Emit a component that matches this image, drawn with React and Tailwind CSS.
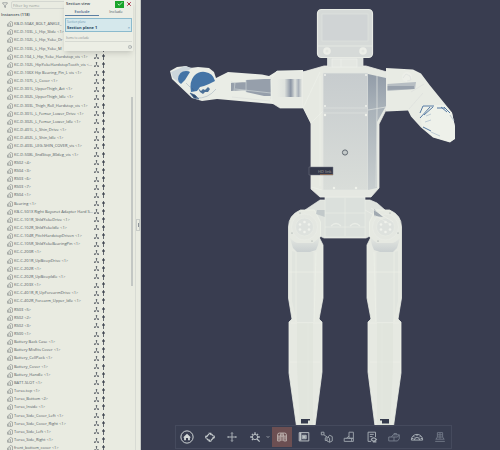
import React from 'react';
import { Filter, Check, X, Info, ChevronDown } from 'lucide-react';

const PARTS = [
  'KB-D-50AX_BOLT_ANKLE_',
  'KC-D-103L_L_Hip_Slide <1>',
  'KC-D-102L_L_Hip_Yoke_Dr',
  'KC-D-103L_L_Hip_Yoke_M',
  'KC-D-104_L_Hip_Yoke_Hardstop_vis <1>',
  'KC-D-102L_HipYokeHardstopTooth_vis <...',
  'KC-D-106X Hip Bearing_Pin_L vis <1>',
  'KC-D-107L_L_Cover <1>',
  'KC-D-301L_UpperThigh_Act <1>',
  'KC-D-302L_UpperThigh_Idle <1>',
  'KC-D-303L_Thigh_Roll_Hardstop_vis <1>',
  'KC-D-301L_L_Femur_Lower_Drive <1>',
  'KC-D-302L_L_Femur_Lower_Idle <1>',
  'KC-D-401L_L_Shin_Drive <1>',
  'KC-D-402L_L_Shin_Idle <1>',
  'KC-D-403L_LEG-SHIN_COVER_vis <1>',
  'KC-D-508L_EndStop_80deg_vis <1>',
  'RS02 <4>',
  'RS04 <3>',
  'RS03 <6>',
  'RS03 <7>',
  'RS04 <1>',
  'Bearing <1>',
  'KB-C-501X Right Bayonet Adapter Hard S...',
  'KC-C-101R_ShldYokeDrive <1>',
  'KC-C-102R_ShldYokeIdle <1>',
  'KC-C-104R_PitchHardstopDriven <1>',
  'KC-C-105R_ShldYokeBearingPin <1>',
  'KC-C-200R <1>',
  'KC-C-201R_UpBicepDrive <1>',
  'KC-C-202R <1>',
  'KC-C-202R_UpBicepIdle <1>',
  'KC-C-203X <1>',
  'KC-C-401R_R_UpForearmDrive <1>',
  'KC-C-402R_Forearm_Upper_Idle <1>',
  'RS03 <5>',
  'RS02 <2>',
  'RS02 <3>',
  'RS00 <1>',
  'Battery Back Case <1>',
  'Battery Misfits Cover <1>',
  'Battery_CellPack <1>',
  'Battery_Cover <1>',
  'Battery_Handle <1>',
  'BATT-SLOT <1>',
  'Torso-top <1>',
  'Torso_Bottom <2>',
  'Torso_Inside <1>',
  'Torso_Side_Cover_Left <1>',
  'Torso_Side_Cover_Right <1>',
  'Torso_Side_Left <1>',
  'Torso_Side_Right <1>',
  'front_bottom_cover <1>',
];

function PartIcon() {
  return (
    <svg viewBox="0 0 12 12" className="h-[6px] w-[6px] shrink-0 text-[#8b908f]" fill="none" stroke="currentColor" strokeWidth="1.3">
      <path d="M4 3.5 6.5 1l4.5 1.5V10L7 11.5 3.5 10V5.5M1 6l2.5-1.5M1 6v4.5h3M4 3.5 7 5v6" />
    </svg>
  );
}

function MateIcon() {
  return (
    <svg viewBox="0 0 12 12" className="h-[5px] w-[5px]" fill="#50565f" stroke="#50565f" strokeWidth="1.4">
      <path d="M6 2v5M6 7 2 10M6 7l4 3" />
      <circle cx="6" cy="2" r="1.3" />
      <circle cx="2" cy="10" r="1.3" />
      <circle cx="10" cy="10" r="1.3" />
    </svg>
  );
}

function PinIcon() {
  return (
    <svg viewBox="0 0 6 12" className="h-[6px] w-[3px]" fill="#434954">
      <path d="M.8 2h4.4v4H.8zM2.2 0h1.6v12H2.2z" />
    </svg>
  );
}

function PartRow({ name }) {
  return (
    <li className="flex min-h-0 flex-1 items-center">
      <PartIcon />
      <span className="ml-px text-[4px] leading-[8px] whitespace-nowrap">{name}</span>
      <span className="ml-auto flex items-center gap-[3px]">
        <button type="button" aria-label="Show mates" className="flex"><MateIcon /></button>
        <button type="button" aria-label="Pin part" className="flex"><PinIcon /></button>
      </span>
    </li>
  );
}

function InstancePanel() {
  return (
    <aside className="flex h-full w-[141px] shrink-0 border-r border-[#c5c9c6] bg-[#e9ebe1] text-[#50585f]">
      <div className="flex min-w-0 flex-1 flex-col">
        <div className="flex items-center gap-[3px] pt-px pl-[2px]">
          <Filter className="h-[6px] w-[6px] text-[#626970]" />
          <input
            aria-label="Filter by name"
            placeholder="Filter by name"
            className="h-2 w-[110px] rounded-xs border border-[#d4d7d1] px-px text-[4px] placeholder:text-[#969c9a]"
          />
        </div>
        <h2 className="mt-[2px] mb-px pl-px text-[4px] leading-[8px] font-semibold text-[#4b525b]">Instances (118)</h2>
        <ul className="-mb-[2px] flex min-h-0 flex-1 flex-col pr-[26px] pl-[7px]">
          {PARTS.map((name, i) => <PartRow key={i} name={name} />)}
        </ul>
      </div>
      <div className="flex w-1 flex-col pt-[97px]">
        <div className="h-[189px] w-[2px] bg-[#c3c7c4]" />
      </div>
      <div className="flex w-[5px] items-center border-l border-[#d8dbd4]">
        <button type="button" aria-label="Collapse panel" className="flex h-3 w-1 items-center justify-center border border-[#c8ccc8]">
          <span className="h-1 w-px bg-[#8b9197]" />
        </button>
      </div>
    </aside>
  );
}

function SectionDialog() {
  return (
    <section className="absolute top-0 left-16 w-[69px] bg-[#eceee5] pb-[2px] text-[4px] text-[#4d5965] shadow-md">
      <div className="flex h-2 items-center pl-[2px] font-semibold text-[#3c4854]">
        <h2 className="flex-1">Section view</h2>
        <button type="button" aria-label="Accept" className="flex h-[7px] w-[9px] items-center justify-center bg-[#18a329] text-white">
          <Check className="h-[6px] w-[6px]" strokeWidth={3} />
        </button>
        <button type="button" aria-label="Cancel" className="flex w-[9px] justify-center text-[#a83049]">
          <X className="h-[6px] w-[6px]" strokeWidth={4} />
        </button>
      </div>
      <div className="flex h-2 leading-[8px]">
        <button type="button" className="ml-px flex-1 border-b border-[#5b7fa3] font-semibold text-[#3f668e]">Exclude</button>
        <button type="button" className="flex-1">Include</button>
      </div>
      <div className="mx-px mt-[2px] h-[14px] border border-[#8bbacd] bg-[#d5e8ec] px-px pt-px">
        <p className="text-[3px] leading-[5px] text-[#6e97b2]">Section plane</p>
        <div className="flex justify-between leading-[6px] font-bold text-[#2c4a63]">
          <span>Section plane 1</span>
          <button type="button" aria-label="Remove plane" className="text-[#74a2bc]">×</button>
        </div>
      </div>
      <p className="mx-px mt-[3px] border-b border-[#d7dad3] pl-px text-[3px] leading-[6px] text-[#868d8d]">Items to exclude</p>
      <Info className="mt-[3px] mr-px ml-auto h-1 w-1 text-[#69737d]" />
    </section>
  );
}

function Leg({ transform }) {
  return (
    <g transform={transform}>
      <path d="M288.5 227q0-12 12-17h14l6 12v14l-1 2 3.5 7v53l-4 21 3 3v50l-7 54h-18.5l-7.5-53v-51l3-3-3.5-21z" fill="#e6e9e2" stroke="#eef1e9" strokeWidth=".8" />
      <path d="M296 252h17.5v70H297l-5-21v-50z" fill="#e0e4de" />
      <path d="M296 252v70M316 252l-2 70M289 272h34M291 323h30M308 323v100M290 362h30" stroke="#edf0e8" strokeWidth=".7" fill="none" />
      <path d="M297 323h16v103h-13l-3-58z" fill="#dee2db" opacity=".6" />
      <path d="M290 238q5 5 8 5h15l7-6-2 8-2 5-6 2h-13l-4-4z" fill="url(#joint)" />
      <circle cx="304.5" cy="227" r="13" fill="#e4e7e1" stroke="#eaede6" strokeWidth=".7" />
      <circle cx="304.5" cy="227" r="9" fill="#dee2de" stroke="#e9ece6" strokeWidth=".6" />
      <g fill="#f0f2ec">
        <circle cx="304.5" cy="222" r="1.3" />
        <circle cx="309" cy="224.5" r="1.3" />
        <circle cx="309" cy="229.5" r="1.3" />
        <circle cx="304.5" cy="232" r="1.3" />
        <circle cx="300" cy="229.5" r="1.3" />
        <circle cx="300" cy="224.5" r="1.3" />
      </g>
      <g fill="#7c8489">
        <circle cx="300" cy="213" r=".5" />
        <circle cx="292" cy="233" r=".5" />
        <circle cx="312" cy="241" r=".5" />
      </g>
      <path d="M301 419h9v1.500h-2v3h-7z" fill="#343a4c" />
    </g>
  );
}

function Robot() {
  return (
    <svg viewBox="141 0 359 450" className="h-full w-full" role="img" aria-label="Robot assembly">
      <defs>
        <linearGradient id="panel" x2="0" y2="1">
          <stop stopColor="#c7ccce" />
          <stop offset="1" stopColor="#d9ddd9" />
        </linearGradient>
        <linearGradient id="side" x2="0" y2="1">
          <stop stopColor="#929ca8" />
          <stop offset=".3" stopColor="#a9b2b9" />
          <stop offset="1" stopColor="#c8cecf" />
        </linearGradient>
        <linearGradient id="tube">
          <stop stopColor="#e7eae4" />
          <stop offset=".3" stopColor="#dfe3df" />
          <stop offset=".55" stopColor="#8b95a4" />
          <stop offset=".72" stopColor="#dfe3df" />
          <stop offset=".86" stopColor="#aab2bb" />
          <stop offset="1" stopColor="#e7eae4" />
        </linearGradient>
        <linearGradient id="joint" x2="0" y2="1">
          <stop stopColor="#e5e8e2" />
          <stop offset="1" stopColor="#c9cfd0" />
        </linearGradient>
      </defs>

      {/* hips and legs */}
      <path d="M320 200h50l7 3 8 7-5 24-10 2-4 2h-42l-4-2-10-2-5-24z" fill="#dfe3de" stroke="#eaede6" strokeWidth=".7" />
      <Leg />
      <Leg transform="translate(690 0) scale(-1 1)" />
      <path d="M317 210h8v7l-9-3z" fill="#b5bdc2" opacity=".7" />
      <path d="M374 209l9 8-9-1z" fill="#8f99a4" opacity=".8" />
      <path d="M365 210l25 14M371 208l22 14" stroke="#eef0e9" strokeWidth=".6" />
      <path d="M325 197h40v40h-40z" fill="#dbe0dc" stroke="#e9ece6" strokeWidth=".7" />
      <path d="M345 198v38M325 213h40M325 227h40" stroke="#eceee8" strokeWidth=".6" />
      <path d="M331 226q5-5 10 0M350 226q5-5 10 0" stroke="#e9ece6" strokeWidth="1.2" fill="none" />

      {/* left arm */}
      <path d="M303 70l-26 1-8 5-7-1.500-34-2.500-12 6-2-6-5-4-11-1-8 1-4-2-9 1-7 4 2 8 20 19 10 3 15-2 56 5 8-3 7 5h15z" fill="#eaede6" />
      <path d="M171 72l14-6 7 2-6 4-6 11-7-5z" fill="#ccd6db" />
      <path d="M178 79q1-8 8-8 3 0 4 1l-5 8-4 4q-3-2-3-5z" fill="#4474a6" />
      <path d="M191 92q-2-10 3-16 5-5 11-4 8 1 10 9l-6 3-5 2-4 1-3 4z" fill="#4474a6" />
      <path d="M198 88l3 3 2-2 2 1 3-3 2 2-2 3h-3l-2 2-3-2z" fill="#4c7198" />
      <path d="M190 93l5 2 4 4-5-1zM192 88l2 3" fill="#314c6e" stroke="#3d628d" strokeWidth=".7" />
      <path d="M196 98q12 1 20-9M186 83l4 4" fill="none" stroke="#a6b5c1" strokeWidth=".6" />
      <path d="M231 83l15-1v8l-15 1zM246 80l18-1h7v17h-7l-18-4z" fill="#969fab" />
      <path d="M231 82l4 1-1 8M246 80v12M235 89l36 4" stroke="#ccd2d4" strokeWidth=".7" fill="none" />
      <path d="M271 77v22M232 97l38 4" stroke="#dce0dc" strokeWidth=".7" />
      <path d="M277 71h26v37h-23l-8-5-1-23z" fill="#e7eae4" stroke="#edf0e9" strokeWidth=".7" />
      <path d="M277 79h25v18h-25z" fill="url(#tube)" />

      {/* right arm */}
      <path d="M386 68l27 1.500 8 4 9 12 22 27 3 14v12l-5 4-17-5-12-10-10-11-3-6-22 1z" fill="#e8ebe4" />
      <path d="M387 84l29-2-1 7-28 2z" fill="#b7bec3" />
      <path d="M387 86h27v3l-27 1z" fill="#98a1ac" />
      <circle cx="407" cy="77" r="5" fill="#eceee8" />
      <path d="M403 78l3-4 4 2 1 4-4 1M411 92l13-8M409 109l14-16" fill="none" stroke="#dce0dc" strokeWidth=".7" />
      <path d="M420 110l3-5h22l7 8 3 14v12l-5 3-17-5-11-10z" fill="#eef1ea" />
      <path d="M420 113l3-7h11M420 118l10-11M424 115l9-8M437 108l8 0M441 107l6 5M444 107l6 6M423 127l8 4" fill="none" stroke="#5579a2" strokeWidth="1" />
      <path d="M426 116l5-2M450 115l4 6M431 132l9 4M425 122l6-2" fill="none" stroke="#a9bccb" strokeWidth=".7" />

      {/* torso */}
      <path d="M303 72l21-6h42l21 6v36l-8 16v64l-8 9h-51l-9-8v-66l-8-16z" fill="#e5e8e2" stroke="#eceee7" strokeWidth=".8" />
      <path d="M303 72l20-5v123l-3 6-9-8v-64l-8-16z" fill="#e6e9e2" />
      <path d="M311 123l12-12M303 108l17-36M311 187l11 3M320 76v110" stroke="#eff1eb" strokeWidth=".6" fill="none" />
      <path d="M323 73h45v117h-45z" fill="url(#panel)" stroke="#e4e7e2" strokeWidth=".7" />
      <path d="M368 74l18 4v28l-9 16v66l-9 2z" fill="url(#side)" />
      <path d="M377 76v32l-1 79M368 110l18-3M323 108h45M323 113h45" stroke="#dce0dd" strokeWidth=".8" fill="none" />
      <g fill="#f0f2ec">
        <circle cx="325" cy="75" r="1" />
        <circle cx="366" cy="75" r="1" />
        <circle cx="325" cy="115" r="1.2" />
        <circle cx="366" cy="115" r="1.2" />
        <circle cx="325" cy="106" r="1" />
        <circle cx="366" cy="106" r="1" />
        <circle cx="334" cy="188" r="1.2" />
        <circle cx="356" cy="188" r="1.2" />
      </g>

      {/* neck and head */}
      <path d="M327.500 57h35.500v10h-35.500z" fill="#dde1dd" stroke="#eaede6" strokeWidth=".7" />
      <path d="M332 59h25v8h-25zM341 59v8" fill="#e4e7e2" stroke="#eef0eb" strokeWidth=".7" />
      <rect x="317.5" y="9.5" width="55" height="48" rx="4" fill="#d6dad8" stroke="#e8ebe5" strokeWidth="1.2" />
      <rect x="322" y="14" width="46" height="27" fill="#d0d4d5" stroke="#dfe3df" strokeWidth=".7" />
      <path d="M318 46h54" stroke="#e9ece6" strokeWidth=".8" />
      <circle cx="327" cy="51" r="3.8" fill="#eceee8" />
      <circle cx="363" cy="51" r="3.8" fill="#eceee8" />
      <circle cx="327" cy="51" r="1.5" fill="#e3e6e1" />
      <circle cx="363" cy="51" r="1.5" fill="#e3e6e1" />

      {/* orbit centre and part label */}
      <circle cx="345" cy="152.5" r="2.6" fill="#c4cac9" stroke="#626a72" />
      <path d="M309 167h24v8h-24z" fill="#34394b" stroke="#777985" strokeWidth=".5" />
      <path d="M320 174.500h13" stroke="#a57855" strokeWidth=".7" />
      <text x="318" y="173" fontSize="4" fill="#aaa09a">HD link</text>
    </svg>
  );
}

const TOOLS = [
  {
    label: 'Home',
    tone: 'text-[#d3d8d8]',
    icon: (
      <>
        <circle cx="8" cy="8" r="7" />
        <path d="M3.5 8.5 8 4.2l4.5 4.3h-1.2v3.2H9.2V9H6.8v2.7H4.7V8.500z" fill="currentColor" stroke="none" />
      </>
    ),
  },
  {
    label: 'Rotate',
    tone: 'text-[#c4cacc]',
    icon: (
      <>
        <path d="M4 7.500 7 4.500M9.500 4.500 12 7M12 9l-3 3M6.500 12 4 9.500" strokeWidth="1.4" />
        <path d="M6 3h3.500v3.500zM13.500 6v3.500H10zM10 13.500H6.500V10zM2.500 10V6.500H6z" fill="currentColor" stroke="none" />
      </>
    ),
  },
  { label: 'Pan', tone: 'text-[#aeb5ba]', icon: <path d="M8 3v10M3 8h10M7 4l1-1 1 1M7 12l1 1 1-1M4 7 3 8l1 1M12 7l1 1-1 1" /> },
  {
    label: 'Zoom',
    tone: 'text-[#b9c0c4]',
    menu: true,
    icon: (
      <>
        <circle cx="8" cy="8" r="3" />
        <path d="M8 2.500v2.500M2.500 8H5M11 8h2.500M10.300 10.300l3 3M5.700 10.300 4.500 11.500M4.500 4.500l1 1M11.500 4.500l-1 1" strokeWidth="1.5" />
      </>
    ),
  },
  {
    label: 'Section view',
    tone: 'text-[#bfb5b1]',
    active: true,
    icon: <path d="M3 12.500V5.500Q3 3.500 5 3.500h6q2 0 2 2v7h-3V7H6v5.500zM3 7h3M10 7h3M6 7l1-3.500M10 7 9 3.500M8 4v8.500M4.500 8v3M11.500 8v3" />,
  },
  {
    label: 'Isolate',
    tone: 'text-[#bcc2c6]',
    icon: (
      <>
        <path d="M2.500 3h11v9.500h-11zM6 6h4.500v4H6z" />
        <path d="M6.500 6.500h3.500v3H6.500zM3 3h2v9H3z" fill="currentColor" stroke="none" />
      </>
    ),
  },
  {
    label: 'Named views',
    tone: 'text-[#9da4ac]',
    icon: <path d="M1.500 2.500h3v3h-3zM4.500 5.500 8 8M9 8l2-2 3 1.500v5L11 14l-3-1.500V9zM6 9l2-1.500M6 9v3h2M9 8l2 1.500V14" />,
  },
  { label: 'Explode', tone: 'text-[#9aa1aa]', icon: <path d="M8 2.500h5v7H8zM2.500 9.500H13v3.500H2.500zM8 7 5 9.500M11 9.500V13" /> },
  {
    label: 'Check part',
    tone: 'text-[#a5acb3]',
    icon: (
      <>
        <path d="M12 8V2.500H3.500V13H7M5.500 5h4.500M5.500 7.500h3" />
        <path d="M7 11q3-4 6 0-3 3.500-6 0M13 13.500H9" strokeWidth="1.5" />
      </>
    ),
  },
  { label: 'Display states', tone: 'text-[#757d8b]', icon: <path d="M2 8h6v4.500H2zM5 8l2-2.500h7V10l-2 2.500H8M8 8h4l2-2.500M8 5.500V4h3v1.500" /> },
  {
    label: 'Measure',
    tone: 'text-[#a8afb6]',
    icon: (
      <>
        <path d="M1.500 11.500a6.500 6.500 0 0 1 13 0zM5 11.500a3 3 0 0 1 6 0" />
        <path d="M8 5v2M4 7l1.500 1.500M12 7l-1.500 1.500M2 9.500l2 .5M14 9.500l-2 .5" />
      </>
    ),
  },
  { label: 'Mass properties', tone: 'text-[#6f7785]', icon: <path d="M5 3h6v5H5zM3 10.500h10M2.500 13h11M8 3v7M5 8l-1.500 2.500M11 8l1.500 2.500M5 5.500h6" /> },
];

function ToolButton({ tool }) {
  return (
    <div className={`relative flex min-w-0 flex-1 justify-center ${tool.menu ? 'pr-1' : ''}`}>
      <button
        type="button"
        aria-label={tool.label}
        className={`flex h-5 w-5 items-center justify-center ${tool.tone} ${tool.active ? 'bg-[#6c4f52]' : ''}`}
      >
        <svg viewBox="0 0 16 16" className="h-[14px] w-[14px]" fill="none" stroke="currentColor" strokeWidth="1.1">
          {tool.icon}
        </svg>
      </button>
      {tool.menu && (
        <button type="button" aria-label="Zoom options" className="absolute top-2 right-0 text-[#b0b6bb]">
          <ChevronDown className="h-1 w-1" strokeWidth={5} />
        </button>
      )}
    </div>
  );
}

function Toolbar() {
  return (
    <nav className="absolute inset-x-0 bottom-px mr-12 ml-[34px] flex h-6 items-center border border-[#454a5d] bg-[#393d50]/90">
      {TOOLS.map((tool) => <ToolButton key={tool.label} tool={tool} />)}
    </nav>
  );
}

export default function App() {
  return (
    <main className="relative flex h-screen overflow-hidden bg-[#393d50] font-['Open_Sans',sans-serif]">
      <InstancePanel />
      <div className="relative min-w-0 flex-1">
        <Robot />
        <Toolbar />
      </div>
      <SectionDialog />
    </main>
  );
}
